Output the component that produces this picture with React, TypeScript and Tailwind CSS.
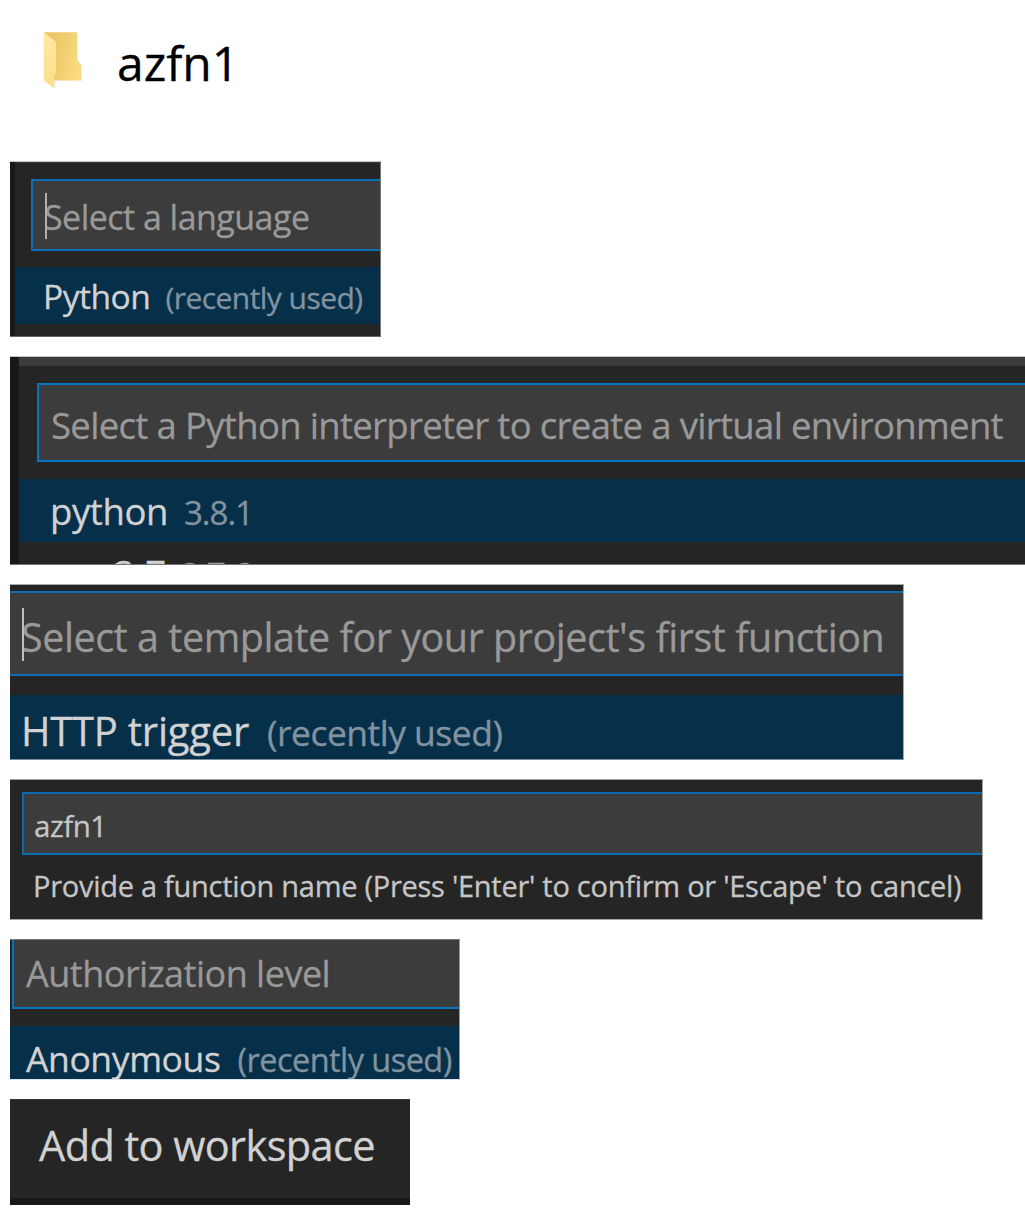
import type { ReactNode } from "react";

function FolderIcon() {
  return (
    <svg className="ml-[43px] mt-[31px] h-[60px] w-[42px] shrink-0" viewBox="43 31 42 60">
      <defs>
        <linearGradient id="back" x1="0" y1="0.2" x2="1" y2="0.5">
          <stop offset="0" stopColor="#e8c465" />
          <stop offset="0.5" stopColor="#efcd6f" />
          <stop offset="1" stopColor="#fbdb80" />
        </linearGradient>
        <linearGradient id="flap" x1="0" y1="0" x2="0.2" y2="1">
          <stop offset="0" stopColor="#fee9a6" />
          <stop offset="1" stopColor="#fddf8b" />
        </linearGradient>
      </defs>
      <path d="M54 80.4H83L80 81.2H56L55.5 88.4L54 88.8Z" fill="#e4e4e4" opacity="0.5" />
      <path d="M44 32.3H77.4V60.6L81.5 64.8V80.6H50Z" fill="url(#back)" />
      <path d="M43.7 32.3L55 41Q56 42 56 43.5V73.5L54.2 75.5V88.4L43.7 80.6Z" fill="url(#flap)" />
    </svg>
  );
}

function Panel({ className, children }: { className: string; children: ReactNode }) {
  return <section className={`relative ml-[10px] overflow-hidden whitespace-pre ${className}`}>{children}</section>;
}

export default function App() {
  return (
    <main className="h-[1231px] w-[1025px] overflow-hidden bg-white font-['Open_Sans','Noto_Sans',sans-serif] [-webkit-text-stroke:0.3px]">
      <header className="flex h-[161px] items-start">
        <FolderIcon />
        <h1 className="ml-[32px] text-[48px] leading-[126px] text-black">azfn1</h1>
      </header>

      <Panel className="flex h-[176px] w-[371px] border-y border-r border-t-[#c4c4c4] border-r-[#777777] border-b-[#666666] bg-[#252525]">
        <div className="w-[5px] shrink-0 bg-[#181818]" />
        <div className="flex-1 border-t border-[#363636]">
          <div className="relative ml-4 mt-4 h-[72px] border-y-2 border-l-2 border-[#0c6fb5] bg-[#3c3c3c]">
            <span className="absolute left-[12px] top-[12px] h-[46px] w-[2px] bg-[#b0b0b0]" />
            <p className="pl-[11px] text-[34px] leading-[73px] tracking-[-0.53px] text-[#999999]">Select a language</p>
          </div>
          <div className="mt-4 flex h-[57px] items-baseline bg-[#062f4a] pl-[28px] leading-[59px]">
            <span className="text-[33.6px] tracking-[-0.5px] text-[#d2d2d2]">Python</span>
            <span className="ml-[15px] text-[30px] tracking-[-0.55px] text-[#8293a0]">(recently used)</span>
          </div>
        </div>
      </Panel>

      <Panel className="mt-[19px] flex h-[209px] w-[1015px] border-y border-t-[#c4c4c4] border-b-[#777777] bg-[#252525]">
        <div className="w-[9px] shrink-0 bg-[#181818]" />
        <div className="flex-1">
          <div className="h-[9px] bg-[#3b3b3b]" />
          <div className="ml-[18px] mt-[17px] h-[79px] border-y-2 border-l-2 border-[#0474c4] bg-[#3c3c3c]">
            <p className="pl-[12px] text-[36.5px] leading-[81px] tracking-[-0.67px] text-[#999999]">
              Select a Python interpreter to create a virtual environment
            </p>
          </div>
          <div className="mt-[17px] flex h-[63px] items-baseline bg-[#062f4a] pl-[31px] leading-[65px]">
            <span className="text-[36.5px] tracking-[-0.4px] text-[#d2d2d2]">python</span>
            <span className="ml-[16px] text-[33px] tracking-[-1px] text-[#8293a0]">3.8.1</span>
          </div>
          <div className="flex h-[62px] items-baseline pl-[31px] leading-[62px]">
            <span className="text-[36.5px] tracking-[0.5px] text-[#d2d2d2]">py -3.7</span>
            <span className="ml-[14px] text-[33.5px] tracking-[-1px] text-[#a0a0a0]">3.7.6</span>
          </div>
        </div>
      </Panel>

      <Panel className="mt-[19px] h-[176px] w-[894px] border-y border-r border-t-[#a8a8a8] border-r-[#a8a8a8] border-b-[#7c8c98] bg-[#252525]">
        <div className="relative mt-[6px] h-[85px] border-y-2 border-[#0c6fb5] bg-[#3c3c3c]">
          <span className="absolute left-[12px] top-[15px] h-[53px] w-[2px] bg-[#c0c0c0]" />
          <p className="pl-[11px] text-[39.5px] leading-[88px] tracking-[-0.46px] text-[#999999]">
            Select a template for your project's first function
          </p>
        </div>
        <div className="mt-[19px] flex h-[64px] items-baseline bg-[#062f4a] pl-[11px] leading-[71px]">
          <span className="text-[40px] tracking-[-0.24px] text-[#d2d2d2]">HTTP trigger</span>
          <span className="ml-[18px] text-[35.5px] tracking-[-0.52px] text-[#8293a0]">(recently used)</span>
        </div>
      </Panel>

      <Panel className="mt-[19px] h-[141px] w-[973px] border-y border-r border-[#a4a4a4] bg-[#252525]">
        <div className="ml-[12px] mt-[12px] h-[63px] border-y-2 border-l-2 border-[#0a6cb0] bg-[#3c3c3c]">
          <p className="pl-[10px] text-[29.5px] leading-[63px] tracking-[-0.5px] text-[#c6c6c6]">azfn1</p>
        </div>
        <p className="pl-[23px] text-[29px] leading-[61px] tracking-[-0.27px] text-[#c6c6c6]">
          Provide a function name (Press 'Enter' to confirm or 'Escape' to cancel)
        </p>
      </Panel>

      <Panel className="mt-[19px] h-[141px] w-[450px] border-y border-r border-t-[#777777] border-r-[#999999] border-b-[#dfe5e9] bg-[#252525]">
        <div className="ml-[2px] h-[69px] border-b-2 border-l-2 border-[#0474c4] bg-[#3c3c3c]">
          <p className="pl-[12px] text-[36px] leading-[67px] tracking-[-0.5px] text-[#999999]">Authorization level</p>
        </div>
        <div className="mt-[17px] flex h-[53px] items-baseline bg-[#062f4a] pl-[16px] leading-[65px]">
          <span className="text-[35.5px] tracking-[-0.4px] text-[#d2d2d2]">Anonymous</span>
          <span className="ml-[17px] text-[32.5px] tracking-[-0.55px] text-[#8293a0]">(recently used)</span>
        </div>
      </Panel>

      <Panel className="mt-[19px] h-[106px] w-[400px] border-b-[7px] border-t border-t-[#353535] border-b-[#181818] bg-[#252525]">
        <p className="pl-[29px] text-[41.5px] leading-[90px] tracking-[-0.6px] text-[#d2d2d2]">Add to workspace</p>
      </Panel>
    </main>
  );
}
